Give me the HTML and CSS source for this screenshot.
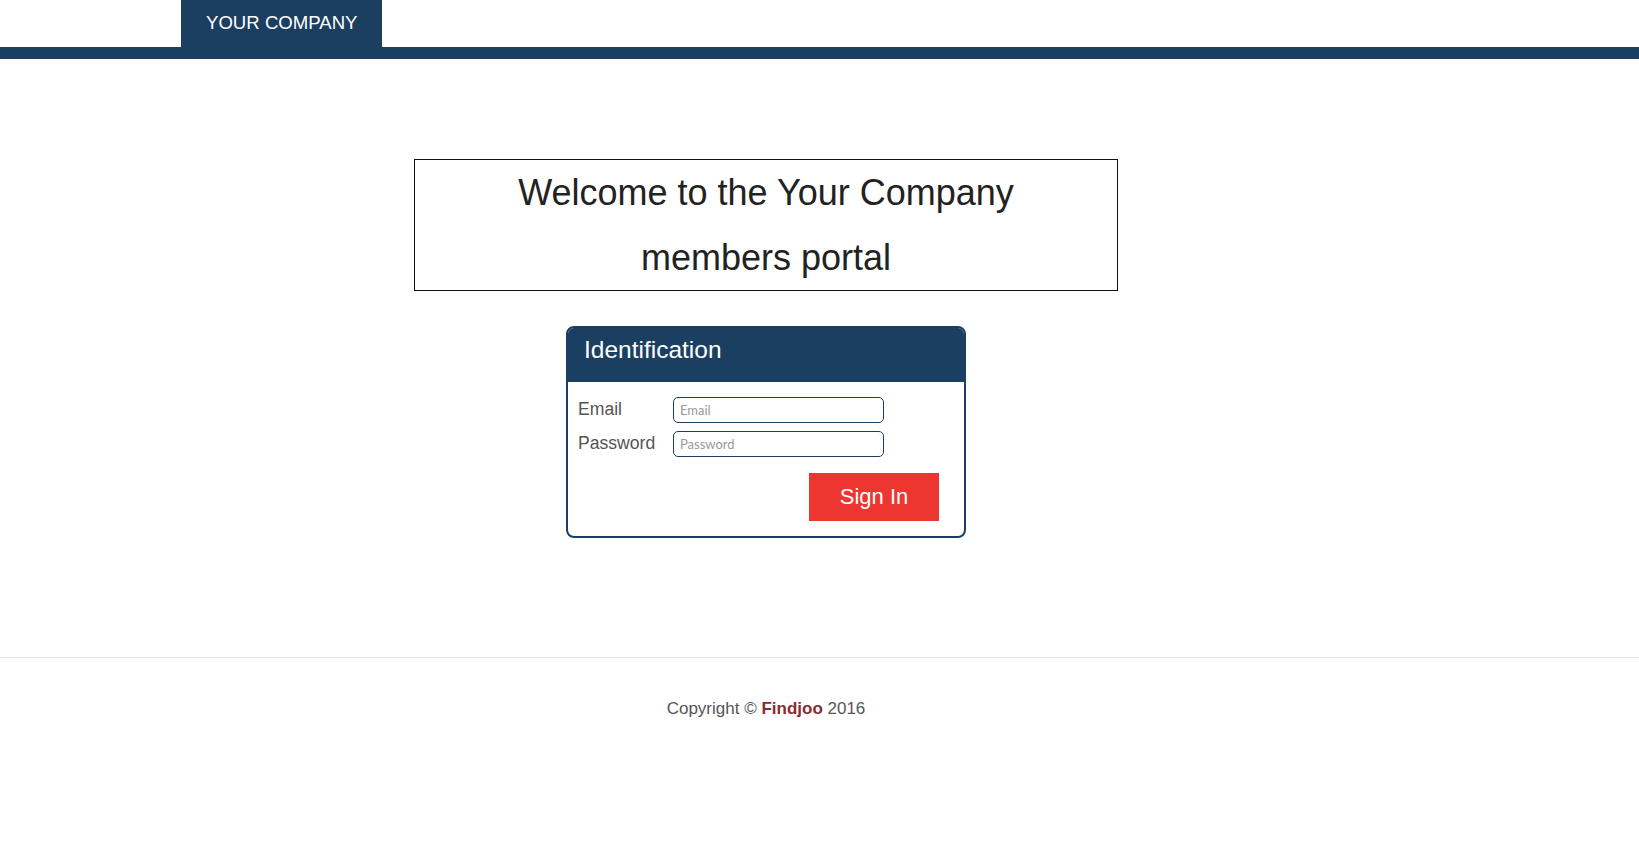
FILE: index.html
```html
<!DOCTYPE html>
<html>
<head>
<meta charset="utf-8">
<title>Members portal</title>
<link rel="stylesheet" href="styles.css">
</head>
<body>
<header class="topbar">
  <nav class="topnav">
    <a class="brand" href="#">YOUR COMPANY</a>
  </nav>
  <div class="stripe"></div>
</header>
<main class="content">
  <div class="welcome">
    <h1>Welcome to the Your Company<br>members portal</h1>
  </div>
  <section class="card">
    <h2 class="card-head">Identification</h2>
    <form class="card-body">
      <div class="row">
        <label class="lbl" for="email">Email</label>
        <input class="field" id="email" type="text" placeholder="Email">
      </div>
      <div class="row">
        <label class="lbl" for="pw">Password</label>
        <input class="field" id="pw" type="password" placeholder="Password">
      </div>
      <div class="actions">
        <button class="signin" type="button">Sign In</button>
      </div>
    </form>
  </section>
</main>
<footer class="footer">
  <p class="copy">Copyright © <strong class="brandname">Findjoo</strong> 2016</p>
</footer>
</body>
</html>
```

FILE: styles.css
```css
* { box-sizing: border-box; }
html, body { margin: 0; padding: 0; background: #fff; }
body { font-family: "Liberation Sans", Arial, sans-serif; color: #222; }

.topbar { display: flex; flex-direction: column; }
.topnav { display: flex; padding-left: 181px; height: 47px; }
.brand {
  display: flex; align-items: center;
  background: #1b3f60; color: #fff; text-decoration: none;
  font-size: 18.6px; padding: 0 0 1px 25px; width: 201px;
}
.stripe { height: 12px; background: #1b3f60; }

.content {
  width: 1532px;
  display: flex; flex-direction: column; align-items: center;
  padding-top: 100px; padding-bottom: 119px;
}
.welcome {
  width: 704px; border: 1px solid #111;
  text-align: center;
}
.welcome h1 {
  margin: 0; font-weight: normal; font-size: 36px; line-height: 65px; color: #222;
}

.card {
  margin-top: 35px; width: 400px;
  border: 2px solid #1b3f60; border-radius: 8px; overflow: hidden;
}
.card-head {
  margin: 0; background: #1b3f60; color: #fff; font-weight: normal;
  font-size: 24.5px; height: 54px; padding: 7px 0 0 16px; line-height: 30px;
}
.card-body { padding: 15px 0 15px 10px; display: flex; flex-direction: column; }
.row { display: flex; align-items: center; height: 26px; margin-bottom: 8px; }
.lbl { width: 95px; font-size: 17.6px; color: #555; padding-bottom: 2px; }
.field {
  width: 211px; height: 26px; border: 1px solid #1b3f60; border-radius: 5px;
  padding: 0 6px; font-family: Lato, "Noto Sans", sans-serif; font-size: 13px; color: #333;
}
.field::placeholder { color: #999; }
.actions { display: flex; justify-content: flex-end; padding-right: 25px; margin-top: 8px; }
.signin {
  width: 130px; height: 48px; border: none; background: #ee3631; color: #fff;
  font-family: "Liberation Sans", Arial, sans-serif; font-size: 22px; cursor: pointer;
}

.footer { border-top: 1px solid #e8e8e8; width: 100%; }
.copy {
  width: 1532px; text-align: center; margin: 41px 0 0 0;
  font-size: 17px; color: #555;
}
.brandname { color: #8b2a30; }
```
